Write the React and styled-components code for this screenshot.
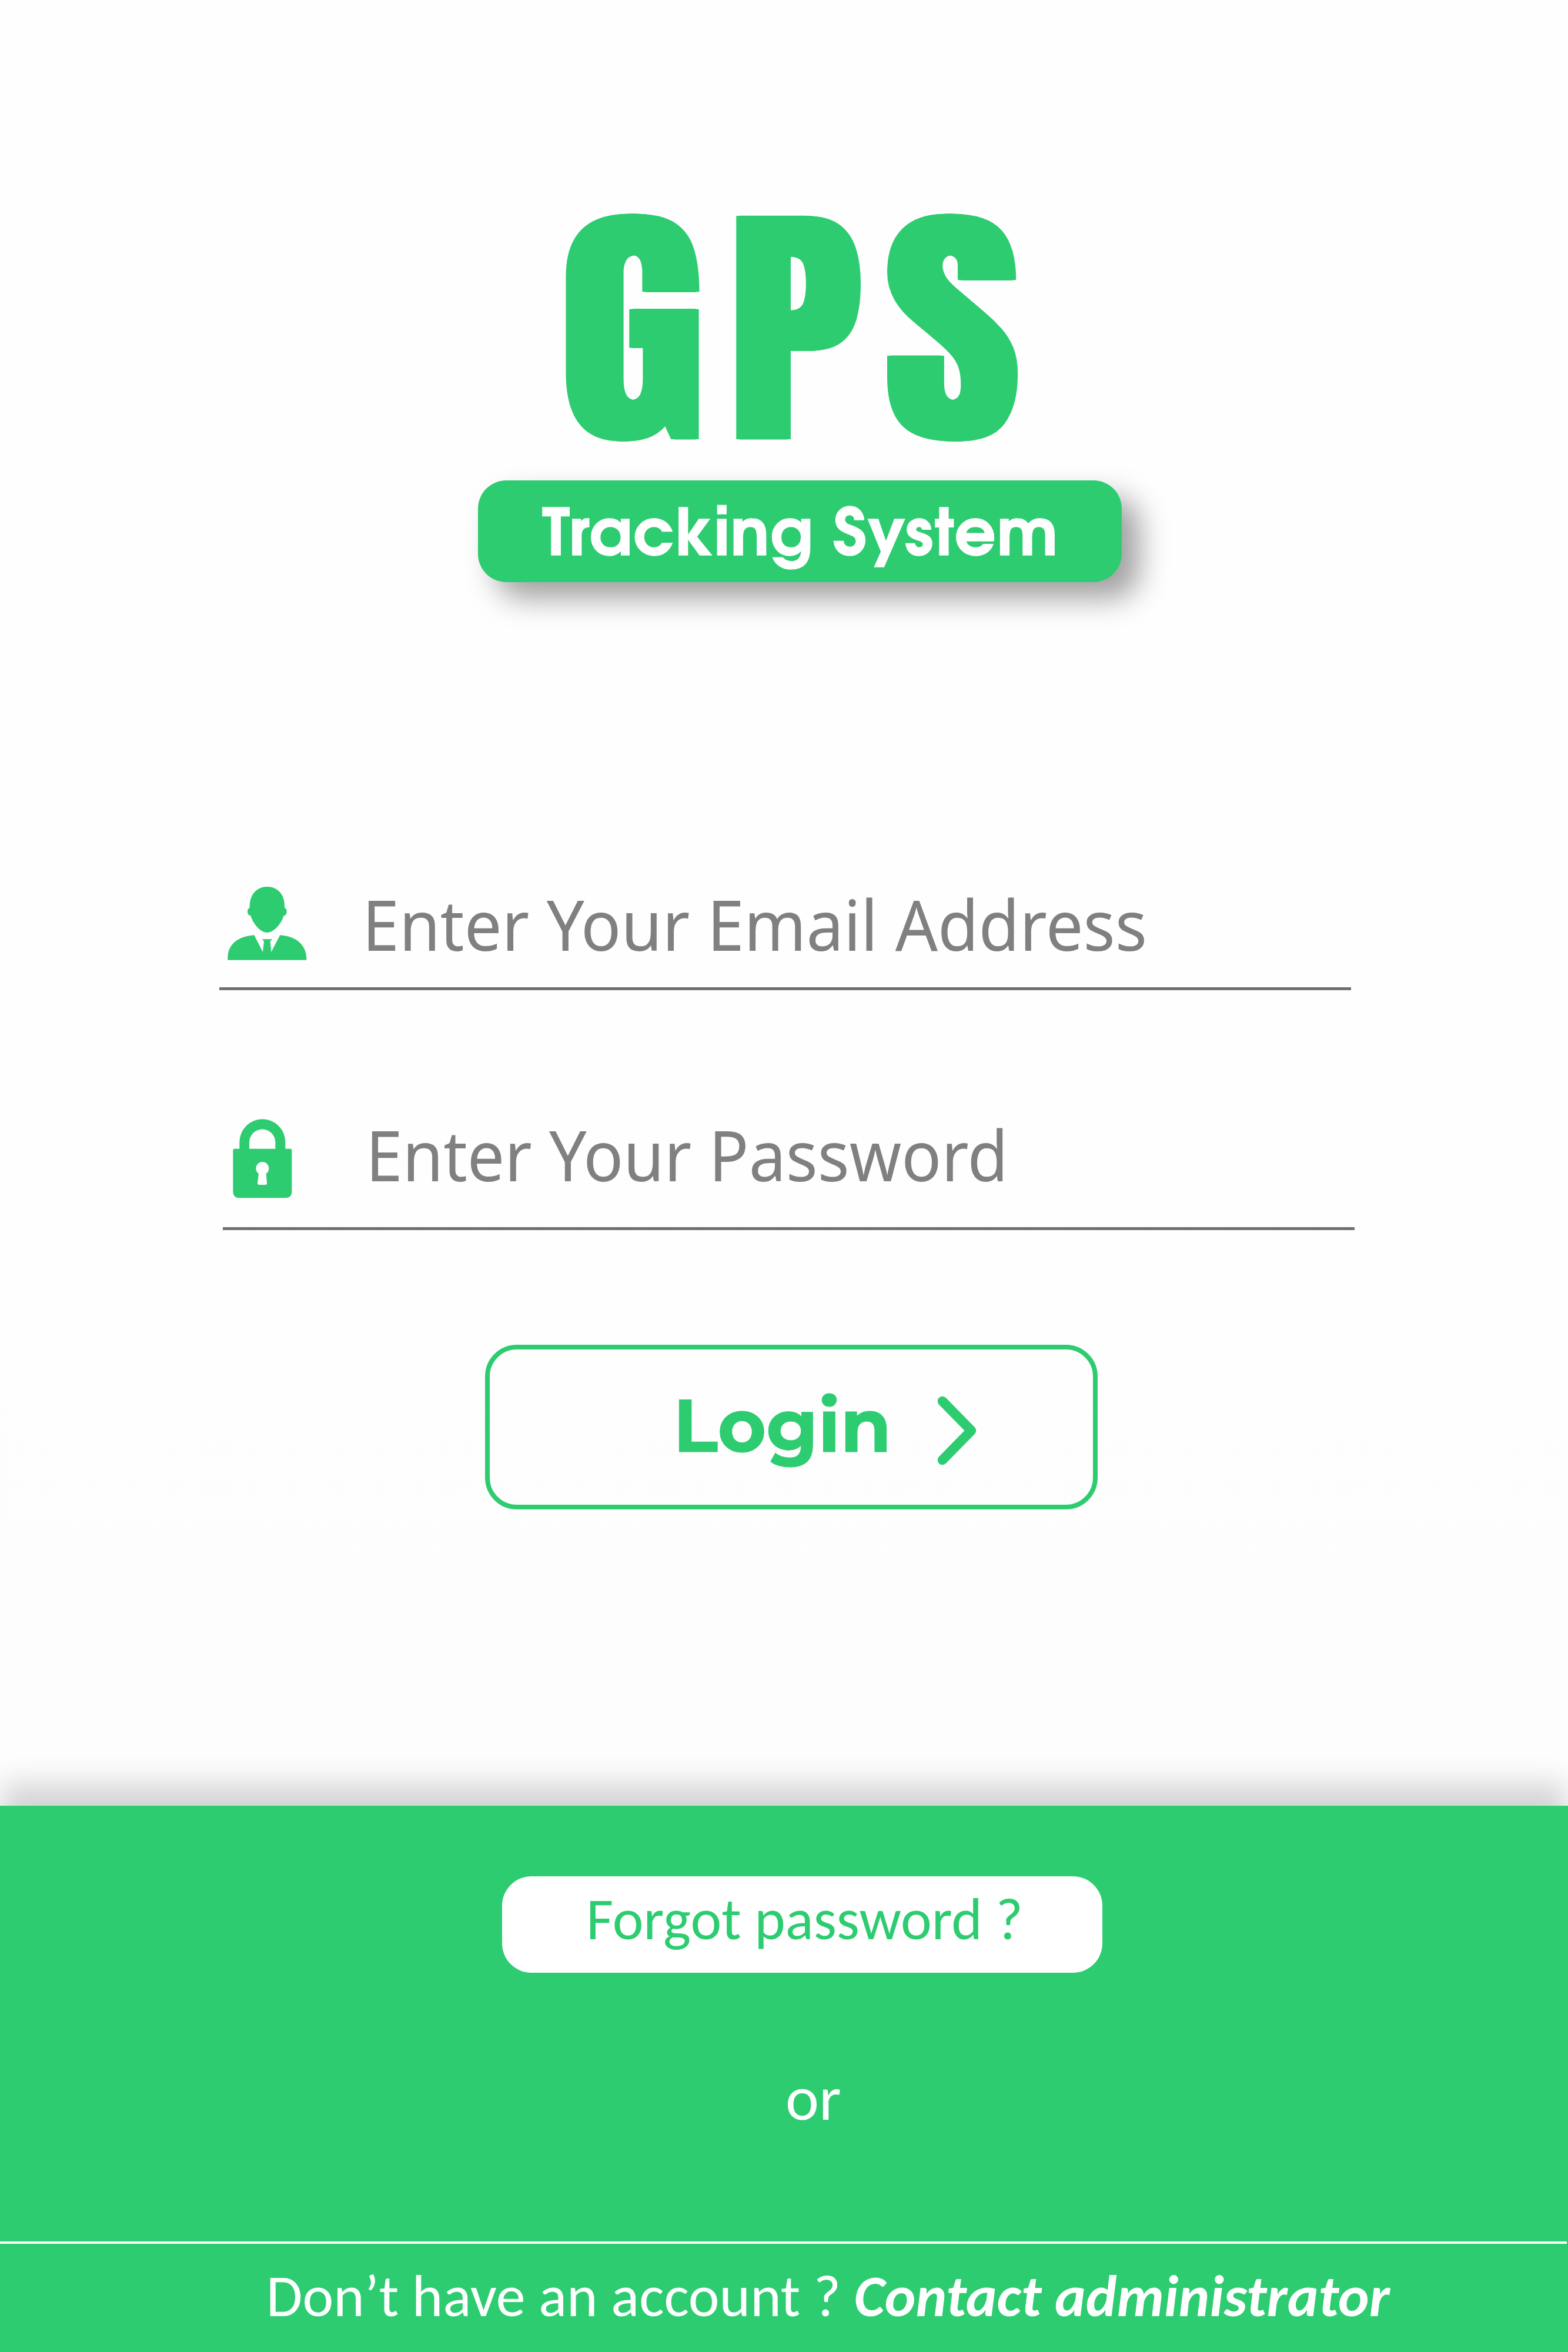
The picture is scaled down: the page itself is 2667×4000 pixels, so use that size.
import React from "react";
import styled, { createGlobalStyle } from "styled-components";

const green = "#2ecc71";

const GlobalStyle = createGlobalStyle`
  *, *::before, *::after { box-sizing: border-box; }
  body { margin: 0; background: #fefefe; }
`;

const Page = styled.div`
  width: 2667px;
  height: 4000px;
  display: flex;
  flex-direction: column;
  overflow: hidden;
  white-space: nowrap;
  background: #fefefe;
`;

const Main = styled.main`
  height: 3071px;
  display: flex;
  flex-direction: column;
  align-items: flex-start;
  background: linear-gradient(#fefefe 60%, #fdfdfd 92%);
`;

const Wordmark = styled.h1`
  display: flex;
  height: 817px;
  margin: 0 0 0 953px;
  padding-top: 260px;
  color: ${green};
  font: 400 442px/600px Anton, Inter, sans-serif;
  text-shadow: 5.5px 0 ${green}, -5.5px 0 ${green}, 2.5px 0 ${green}, -2.5px 0 ${green};
  -webkit-text-stroke: 1px ${green};
`;

const Letter = styled.span`
  width: ${(p) => p.$width}px;
  height: 480px;
  transform: scaleX(${(p) => p.$stretch});
  transform-origin: left;
  line-height: 600px;
`;

const Badge = styled.div`
  width: 1095px;
  height: 173px;
  margin-left: 813px;
  padding-left: 2px;
  display: flex;
  justify-content: center;
  border-radius: 48px;
  background: ${green};
  box-shadow: 30px 28px 50px rgba(0, 0, 0, 0.37);
  color: #fff;
  font: 700 110px/193px "TeX Gyre Adventor", Inter, sans-serif;
  letter-spacing: 1.7px;
  -webkit-text-stroke: 1.5px #fff;
`;

const Form = styled.form`
  margin: 0;
  display: flex;
  flex-direction: column;
  align-items: flex-start;
`;

const Field = styled.label`
  width: 1925px;
  height: ${(p) => p.$height}px;
  margin-left: ${(p) => p.$indent}px;
  display: flex;
  align-items: flex-end;
  border-bottom: 5px solid #707070;
  color: #808080;
  font: 400 119px/162px "Noto Sans", "Open Sans", sans-serif;
`;

const IconSlot = styled.span`
  width: ${(p) => p.$width}px;
  padding-left: ${(p) => p.$inset}px;
  padding-bottom: ${(p) => p.$lift}px;
  display: flex;
`;

const Hint = styled.span`
  height: 162px;
  margin-bottom: ${(p) => p.$lift}px;
  transform: scaleX(${(p) => p.$stretch});
  transform-origin: left;
`;

const LoginButton = styled.button`
  width: 1042px;
  height: 280px;
  margin: 195px 0 0 825px;
  padding: 0 0 6px 312px;
  display: flex;
  align-items: center;
  gap: 78px;
  border: 8px solid ${green};
  border-radius: 54px;
  background: transparent;
  color: ${green};
  font: 700 126px/154px Montserrat, Inter, sans-serif;
  -webkit-text-stroke: 1px ${green};

  svg { margin-top: 18px; }
`;

const Footer = styled.footer`
  position: relative;
  height: 929px;
  display: flex;
  flex-direction: column;
  align-items: flex-start;
  background: ${green};
  box-shadow: 0 -41px 45px -3px rgba(0, 0, 0, 0.16);
  color: #fff;
  font: 400 100px/122px Carlito, Lato, sans-serif;
`;

const ForgotButton = styled.a`
  width: 1021px;
  height: 164px;
  margin: 120px 0 0 854px;
  padding-left: 8px;
  display: flex;
  justify-content: center;
  border-radius: 50px;
  background: #fff;
  color: ${green};
  line-height: 147px;
`;

const Or = styled.span`
  height: 457px;
  padding: 147px 0 0 1336px;
  font-size: 108px;
  line-height: 132px;
`;

const Signup = styled.p`
  width: 2665px;
  margin: 0;
  padding: 28px 0 0 453px;
  border-top: 4px solid #fff;
`;

const Contact = styled.a`
  font-weight: 700;
  font-style: italic;
`;

const UserIcon = () => (
  <svg width="134.7" height="124.7" viewBox="81 86 404 374" fill={green}>
    <path d="M283 86C330 86 372 118 372 185V194C380 196 384 204 383 213C383 226 376 234 368 234C355 276 318 320 283 320C248 320 212 276 199 234C190 234 183 226 183 213C183 203 187 196 194 194V185C194 118 238 86 283 86Z" />
    <path d="M82 460C79 390 120 341 217 333L261 419L267 364L257 354H310L299 364L304 419L349 333C446 341 486 395 484 460Z" />
  </svg>
);

const LockIcon = () => (
  <svg width="100.7" height="134.7" viewBox="107 70 302 404" fill={green}>
    <path
      fillRule="evenodd"
      d="M141 222V188A117 117 0 0 1 375 188V222H400Q408 222 408 230V440Q408 473 375 473H141Q108 473 108 440V230Q108 222 116 222ZM191 222H324V189A66.500 66.500 0 0 0 191 189ZM239 349L233 397Q233 406 242 406H273Q282 406 281 397L277 349A33 33 0 1 0 239 349Z"
    />
  </svg>
);

const Chevron = () => (
  <svg
    width="68"
    height="118"
    viewBox="0 0 68 118"
    fill="none"
    stroke={green}
    strokeWidth="16.500"
    strokeLinecap="round"
    strokeLinejoin="round"
  >
    <path d="M9 9L58 59L9 109" />
  </svg>
);

export default function App() {
  return (
    <Page>
      <GlobalStyle />
      <Main>
        <Wordmark>
          <Letter $width={287} $stretch={1.14}>G</Letter>
          <Letter $width={265} $stretch={1.082}>P</Letter>
          <Letter $width={230} $stretch={1.125}>S</Letter>
        </Wordmark>
        <Badge>Tracking System</Badge>
        <Form>
          <Field $height={694} $indent={373}>
            <IconSlot $width={243} $inset={14} $lift={46}>
              <UserIcon />
            </IconSlot>
            <Hint $lift={27} $stretch={0.951}>Enter Your Email Address</Hint>
          </Field>
          <Field $height={408} $indent={379}>
            <IconSlot $width={243} $inset={17} $lift={49}>
              <LockIcon />
            </IconSlot>
            <Hint $lift={43} $stretch={0.946}>Enter Your Password</Hint>
          </Field>
          <LoginButton type="button">
            Login
            <Chevron />
          </LoginButton>
        </Form>
      </Main>
      <Footer>
        <ForgotButton>Forgot password ?</ForgotButton>
        <Or>or</Or>
        <Signup>
          Don’t have an account ? <Contact>Contact administrator</Contact>
        </Signup>
      </Footer>
    </Page>
  );
}
